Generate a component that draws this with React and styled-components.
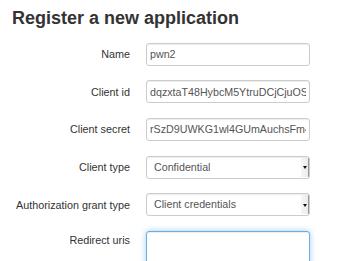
import React from "react";
import styled, { createGlobalStyle } from "styled-components";

const GlobalStyle = createGlobalStyle`
  html, body {
    margin: 0;
    padding: 0;
    background: #fff;
  }
  body {
    font-family: "Liberation Sans", Arial, sans-serif;
    font-size: 10.7px;
    color: #333;
  }
`;

const Page = styled.div`
  padding: 0 12px;
  overflow: hidden;
  height: 261px;
`;

const Title = styled.h3`
  margin: 9px 0 14px;
  font-size: 18px;
  line-height: 1.1;
  font-weight: 700;
  color: #333;
`;

const Form = styled.form`
  display: grid;
  grid-template-columns: 118px 164px;
  column-gap: 16px;
  row-gap: 14.6px;
  align-items: center;
`;

const Label = styled.label`
  text-align: right;
  color: #333;
  font-size: 10.8px;
  align-self: ${({ $top }) => ($top ? "start" : "center")};
  padding-top: ${({ $top }) => ($top ? "3px" : "0")};
`;

const Input = styled.input`
  box-sizing: border-box;
  width: 100%;
  height: 23px;
  padding: 0 3px;
  font-family: inherit;
  font-size: 10.7px;
  color: #555;
  background: #fff;
  border: 1px solid #ccc;
  border-radius: 3px;
  box-shadow: inset 0 1px 1px rgba(0, 0, 0, 0.075);
  outline: none;
`;

const SelectBox = styled.div`
  box-sizing: border-box;
  display: flex;
  align-items: stretch;
  height: 23px;
  border: 1px solid #ccc;
  border-radius: 3px;
  background: #fff;
  box-shadow: inset 0 1px 1px rgba(0, 0, 0, 0.075);
  overflow: hidden;
`;

const Select = styled.select`
  flex: 1;
  min-width: 0;
  appearance: none;
  border: none;
  background: transparent;
  padding: 0 7px 1px;
  font-family: inherit;
  font-size: 10.7px;
  color: #555;
  outline: none;
`;

const Arrow = styled.span`
  width: 7px;
  margin: 1px 0;
  background: linear-gradient(to right, #f6f6f6, #ebebeb);
  border-right: 1px solid #999;
  display: flex;
  align-items: center;
  justify-content: center;

  &::after {
    content: "";
    display: block;
    width: 0;
    height: 0;
    border-left: 2px solid transparent;
    border-right: 2px solid transparent;
    border-top: 3px solid #111;
    margin-top: 1px;
  }
`;

const TextArea = styled.textarea`
  box-sizing: border-box;
  width: 100%;
  height: 60px;
  resize: none;
  border: 1px solid #66afe9;
  border-radius: 3px;
  box-shadow: inset 0 1px 1px rgba(0, 0, 0, 0.075),
    0 0 6px rgba(102, 175, 233, 0.6);
  outline: none;
  font-family: inherit;
  font-size: 10.7px;
`;

const ChoiceField = ({ value, options }) => (
  <SelectBox>
    <Select defaultValue={value}>
      {options.map((o) => (
        <option key={o}>{o}</option>
      ))}
    </Select>
    <Arrow />
  </SelectBox>
);

export default function App() {
  return (
    <>
      <GlobalStyle />
      <Page>
        <Title>Register a new application</Title>
        <Form>
          <Label>Name</Label>
          <Input defaultValue="pwn2" />

          <Label>Client id</Label>
          <Input defaultValue="dqzxtaT48HybcM5YtruDCjCjuOSqXwZ" />

          <Label>Client secret</Label>
          <Input defaultValue="rSzD9UWKG1wl4GUmAuchsFm4kLpQ" />

          <Label>Client type</Label>
          <ChoiceField value="Confidential" options={["Confidential", "Public"]} />

          <Label>Authorization grant type</Label>
          <ChoiceField
            value="Client credentials"
            options={[
              "Authorization code",
              "Implicit",
              "Resource owner password-based",
              "Client credentials",
            ]}
          />

          <Label $top>Redirect uris</Label>
          <TextArea />
        </Form>
      </Page>
    </>
  );
}
